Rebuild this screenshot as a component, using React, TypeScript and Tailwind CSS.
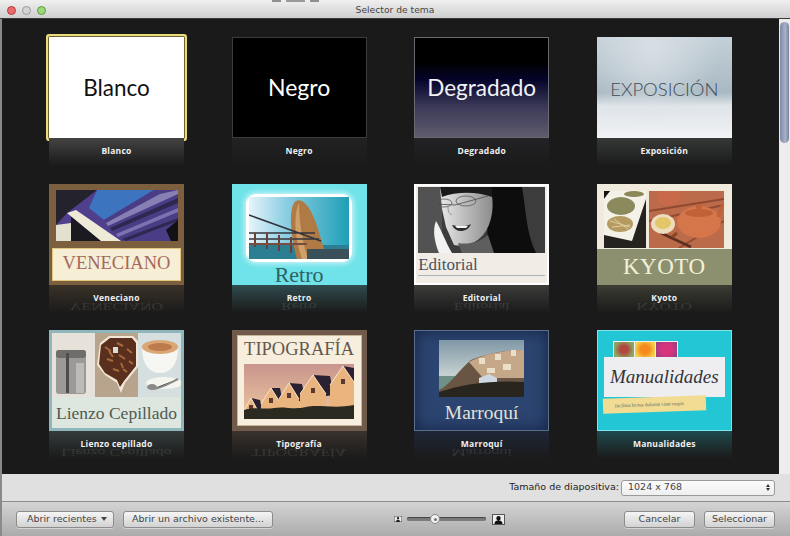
import * as React from 'react';

const uiFont = "font-['DejaVu_Sans',sans-serif]";
const labelFont = "font-['Open_Sans',sans-serif]";
const serif = "font-['Liberation_Serif',serif]";
const gill = "font-['Lato',sans-serif]";

function Photo({ w, h, children, className = '' }: { w: number; h: number; children: React.ReactNode; className?: string }) {
  return (
    <svg viewBox={`0 0 ${w} ${h}`} width={w} height={h} preserveAspectRatio="none" className={`block shrink-0 ${className}`}>
      <g className="blur-[0.6px]">{children}</g>
    </svg>
  );
}

function VenecianoThumb() {
  return (
    <div className="flex h-full flex-col items-center bg-[#7b5f3f] pt-[6px]">
      <Photo w={122} h={51}>
        <rect width="122" height="51" fill="#4f3f8c" />
        <polygon points="41,0 98,0 48,30 33,18" fill="#3c74c0" />
        <polygon points="0,0 41,0 11,23 0,35" fill="#24222c" />
        <polygon points="48,30 98,0 122,0 122,51 65,51" fill="#4a3d86" />
        <polygon points="50,33 104,4 122,0 122,4 52,36" fill="#8880b4" />
        <polygon points="54,38 122,8 122,13 56,41" fill="#2c2850" />
        <polygon points="60,44 122,18 122,22 62,47" fill="#7c72b0" />
        <polygon points="66,49 122,28 122,31 70,51" fill="#2c2850" />
        <polygon points="15,26 45,51 15,51" fill="#1b1a20" />
        <polygon points="11,23 20,20 65,51 45,51" fill="#efe9d8" />
        <polygon points="0,35 15,33 15,51 0,51" fill="#e4e0d0" />
        <polygon points="110,40 122,30 122,51 115,51" fill="#121116" />
      </Photo>
      <div className={`mt-[7px] flex h-[33px] w-[129px] items-center justify-center border border-[#e2c77e] bg-[#f7eed6] text-[18.5px] text-[#a4685c] ${serif}`}>
        VENECIANO
      </div>
    </div>
  );
}

function RetroThumb() {
  return (
    <div className="flex h-full flex-col items-center bg-[#6fe3e9] pt-[10px]">
      <div className="rounded-[10px] border border-white bg-white p-[2px] shadow-[0_0_5px_2px_rgba(255,255,255,0.6)]">
        <Photo w={100} h={62}>
          <defs>
            <linearGradient id="retroSky" x1="0" y1="0" x2="1" y2="0">
              <stop offset="0" stopColor="#e6f4fa" />
              <stop offset="0.35" stopColor="#8fd0e4" />
              <stop offset="1" stopColor="#1f9fb6" />
            </linearGradient>
          </defs>
          <rect width="100" height="62" fill="url(#retroSky)" />
          <rect y="48" width="100" height="14" fill="#2c7f92" />
          <path d="M48 62C40 35 40 8 47 4c7-4 16 8 22 28 3 10 6 20 9 30z" fill="#b07a45" />
          <path d="M50 6c-6 12-4 36 3 56h6C52 40 50 20 50 6z" fill="#d0a06a" />
          <path d="M0 18L72 44M0 36h66M0 42h70" stroke="#33343c" strokeWidth="1.6" fill="none" />
          <path d="M6 36v14M18 36v16M30 38v16M42 40v16" stroke="#6b3f35" strokeWidth="2" />
          <rect x="0" y="46" width="58" height="2" fill="#7a4c40" />
          <rect x="58" y="52" width="42" height="10" fill="#39505a" />
        </Photo>
      </div>
      <div className={`text-[22px] leading-[26px] text-[#2f615f] ${serif}`}>Retro</div>
    </div>
  );
}

function EditorialThumb() {
  return (
    <div className="flex h-full flex-col border-2 border-white bg-[#f2ece7] px-[2px] pt-[1px]">
      <Photo w={127} h={66}>
        <defs>
          <linearGradient id="faceTone" x1="0" y1="0" x2="1" y2="0">
            <stop offset="0" stopColor="#e8e8e8" />
            <stop offset="1" stopColor="#8c8c8c" />
          </linearGradient>
        </defs>
        <rect width="127" height="66" fill="#3c3c3c" />
        <rect width="24" height="66" fill="#525252" />
        <path d="M68 0h36c4 22 4 46 14 66H70z" fill="#0d0d0d" />
        <path d="M22 0h50c5 16 3 36-7 48-8 9-18 12-29 10L28 40 24 22z" fill="url(#faceTone)" />
        <path d="M22 0h52v10C60 5 40 4 24 10z" fill="#1a1a1a" />
        <path d="M40 56c10 2 22-1 30-8l6 18H44z" fill="#5e5e5e" />
        <path d="M18 34c5 8 10 22 16 32H21c-4-10-7-22-3-32z" fill="#f2f2f2" />
        <path d="M34 38c7 2 14 2 19-1-2 5-6 7-10 7s-7-2-9-6z" fill="#2c2c2c" />
        <path d="M37 39h13l-2 2H39z" fill="#f2f2f2" />
        <path d="M17 17l20 1 33-9" stroke="#4a4a4a" strokeWidth="0.8" fill="none" />
        <ellipse cx="26" cy="16" rx="8" ry="4" fill="none" stroke="#5a5a5a" strokeWidth="0.8" />
        <ellipse cx="48" cy="14" rx="10" ry="5" fill="none" stroke="#5a5a5a" strokeWidth="0.8" />
        <path d="M30 20c0 4 1 7 4 8" stroke="#999" strokeWidth="1" fill="none" />
      </Photo>
      <div className={`mt-[2px] text-[17px] leading-[19px] text-[#46535f] ${serif}`}>Editorial</div>
      <div className="mt-[1px] h-[1px] bg-[#aab5b5]" />
    </div>
  );
}

function KyotoThumb() {
  return (
    <div className="flex h-full flex-col bg-[#8d906f]">
      <div className="flex h-[69px] gap-[3px] bg-[#efeadb] px-[7px] pt-[7px]">
        <Photo w={42} h={57}>
          <rect width="42" height="57" fill="#25231f" />
          <polygon points="6,0 42,0 42,8 28,50 0,44 0,8" fill="#f4f1e8" />
          <ellipse cx="17" cy="15" rx="14" ry="9" fill="#8b8a5c" />
          <ellipse cx="30" cy="3" rx="10" ry="3" fill="#8c8757" />
          <ellipse cx="16" cy="33" rx="13" ry="8" fill="#b49b62" />
          <path d="M6 30l20 6M8 36l18-2M10 28l14 10" stroke="#e0cda0" strokeWidth="1" />
          <polygon points="0,0 6,0 0,6" fill="#111" />
        </Photo>
        <Photo w={75} h={57}>
          <rect width="75" height="57" fill="#bb6a4a" />
          <path d="M0 20L75 8M0 30L75 14M30 57L75 30" stroke="#8f4a30" strokeWidth="2" />
          <path d="M12 42l30 14" stroke="#5a3020" strokeWidth="2.5" />
          <ellipse cx="50" cy="31" rx="22" ry="16" fill="#d4754a" />
          <ellipse cx="50" cy="22" rx="14" ry="4" fill="#c06238" />
          <circle cx="50" cy="16" r="3" fill="#c06238" />
          <path d="M69 26c2-6 4-10 5-14" stroke="#c06238" strokeWidth="3" fill="none" />
          <ellipse cx="14" cy="33" rx="12" ry="10" fill="#eeddbd" />
          <ellipse cx="14" cy="32" rx="8" ry="6" fill="#e3c66a" />
          <ellipse cx="20" cy="6" rx="12" ry="9" fill="#c8694a" />
          <path d="M28 42l-5 4" stroke="#8a4526" strokeWidth="3" />
        </Photo>
      </div>
      <div className={`mt-[1px] flex flex-1 items-center justify-center text-[23px] tracking-[0.5px] text-[#f3f0d8] ${serif}`}>KYOTO</div>
    </div>
  );
}

function LienzoThumb() {
  return (
    <div className="flex h-full flex-col border-[3px] border-[#8fb6bb] bg-[#dde6df]">
      <div className="flex h-[64px]">
        <Photo w={43} h={64}>
          <rect width="43" height="64" fill="#e6e2da" />
          <rect x="4" y="17" width="30" height="44" rx="3" fill="#9b9a98" />
          <rect x="4" y="17" width="30" height="8" rx="3" fill="#6f6d6c" />
          <rect x="14" y="20" width="3" height="40" fill="#4f4c4b" />
          <rect x="24" y="30" width="8" height="30" fill="#bcbbb8" />
        </Photo>
        <Photo w={43} h={64}>
          <rect width="43" height="64" fill="#b8a48c" />
          <polygon points="5,10 14,3 38,3 43,8 43,34 30,50 26,60 22,50 10,42 2,32" fill="#f2e6d6" />
          <polygon points="6,12 15,5 37,5 41,10 41,33 29,48 25,54 22,47 10,40 4,31" fill="#5a2f1e" />
          <path d="M10 14l6 4M22 10l6 3M32 16l5 4M12 26l6 2M24 22l6 4M34 28l4 3M18 36l6 2M28 36l4 3M14 18l4 6M26 30l2 5" stroke="#a76a3e" strokeWidth="2" />
          <rect x="18" y="14" width="5" height="6" fill="#dcdcd8" />
        </Photo>
        <Photo w={43} h={64}>
          <rect width="43" height="64" fill="#d6dfdf" />
          <path d="M4 14c0-6 36-6 36 0 0 18-8 26-18 26S4 32 4 14z" fill="#f6f6f2" />
          <ellipse cx="22" cy="14" rx="18" ry="7" fill="#d9a674" />
          <ellipse cx="22" cy="14" rx="12" ry="4" fill="#bd7a4c" />
          <ellipse cx="26" cy="50" rx="18" ry="6" fill="#f5f5f0" />
          <path d="M14 56c8 0 18-6 26-10" stroke="#8a8a88" strokeWidth="2" />
          <ellipse cx="14" cy="54" rx="5" ry="3" fill="#8a8a88" />
        </Photo>
      </div>
      <div className={`mt-[1px] flex flex-1 items-center justify-center whitespace-nowrap text-[17.5px] text-[#4e5b53] ${serif}`}>Lienzo Cepillado</div>
    </div>
  );
}

// gable apex x, apex y, half width, roof end x/y
const houses = [
  [7, 34, 7, 16, 36],
  [27, 24, 10, 36, 24],
  [45, 19, 10, 58, 20],
  [69, 11, 13, 86, 12],
  [99, 2, 13, 110, 4],
];

function TipografiaThumb() {
  return (
    <div className="h-full border-[5px] border-[#6f5a4b]">
      <div className="flex h-full flex-col items-center border border-[#c9b49a] bg-[#f8eedd]">
        <div className={`mt-[2px] text-[18.5px] leading-[22px] text-[#62584e] ${serif}`}>TIPOGRAFÍA</div>
        <Photo w={110} h={55} className="mt-[4px]">
          <defs>
            <linearGradient id="tipoSky" x1="0" y1="0" x2="0" y2="1">
              <stop offset="0" stopColor="#c9958d" />
              <stop offset="1" stopColor="#eec9a0" />
            </linearGradient>
          </defs>
          <rect width="110" height="55" fill="url(#tipoSky)" />
          {houses.map(([ax, ay, hw, rx, ry]) => (
            <g key={ax}>
              <polygon points={`${ax},${ay} ${rx},${ry} ${rx + 4},${ay + 20} ${ax + hw},${ay + hw + 8}`} fill="#2a2230" />
              <polygon points={`${ax - hw},${ay + hw + 6} ${ax},${ay} ${ax + hw},${ay + hw + 6} ${ax + hw},50 ${ax - hw},50`} fill="#e9b47e" />
              <polyline points={`${ax - hw},${ay + hw + 6} ${ax},${ay} ${ax + hw},${ay + hw + 6}`} fill="none" stroke="#f8e4c8" strokeWidth="1" />
              <rect x={ax - 2} y={ay + hw} width="4" height="5" fill="#5a3a30" />
            </g>
          ))}
          <path d="M0 46c10-4 20 0 30-2s20 2 32-1 28 2 48-2v14H0z" fill="#2b2a20" />
        </Photo>
      </div>
    </div>
  );
}

function MarroquiThumb() {
  return (
    <div className="flex h-full flex-col items-center border border-[#5a6f8c] bg-[#2c4570] pt-[9px] shadow-[inset_0_0_16px_rgba(10,20,50,0.7)]">
      <Photo w={85} h={57}>
        <defs>
          <linearGradient id="moSky" x1="0" y1="0" x2="0" y2="1">
            <stop offset="0" stopColor="#7f97a6" />
            <stop offset="0.6" stopColor="#c5d0d0" />
          </linearGradient>
        </defs>
        <rect width="85" height="57" fill="url(#moSky)" />
        <rect y="36" width="26" height="21" fill="#6f9088" />
        <path d="M0 50c10-4 20-20 32-30 14-6 36-10 53-10v47H0z" fill="#6a5544" />
        <path d="M30 22c14-8 36-12 55-12v28H44z" fill="#c4a888" />
        <path d="M40 18h6v6h-6zM56 14h6v6h-6zM72 10h5v6h-5zM48 28h8v5h-8zM64 24h8v6h-8z" fill="#ecdfc9" />
        <path d="M40 38l10-4 8 4v6H40z" fill="#cfd8e2" />
        <path d="M0 52c24-8 54-12 85-10v15H0z" fill="#27251d" />
      </Photo>
      <div className={`mt-[3px] text-[19.5px] leading-[26px] text-[#e4e2d6] ${serif}`}>Marroquí</div>
    </div>
  );
}

function ManualidadesThumb() {
  return (
    <div className="h-full overflow-hidden border border-[#7fe4ea] bg-[#22c6d5] pl-[6px] pt-[10px]">
      <div className="ml-[9px] flex w-[65px] gap-[1px] bg-[#f0f0f0] p-[1px]">
        <div className="h-[15px] w-[21px] bg-[radial-gradient(circle,#b0483f_30%,#8aa864_75%)]" />
        <div className="h-[15px] w-[20px] bg-[radial-gradient(circle,#f58a1f_35%,#f5d04a_80%)]" />
        <div className="h-[15px] w-[21px] bg-[radial-gradient(circle,#d8347e_40%,#9c3d7f_90%)]" />
      </div>
      <div className={`-mt-[1px] flex h-[40px] w-[121px] items-center justify-center bg-[#eeeef0] text-[19px] italic text-[#333338] ${serif}`}>
        Manualidades
      </div>
      <div className={`-ml-[1px] flex h-[15px] w-[103px] -rotate-2 items-center bg-[#f2dc94] pl-[12px] text-[5px] text-[#52615a] ${serif}`}>
        facilisis lectus dolorist vitae turpis
      </div>
    </div>
  );
}

const themes: { name: string; glow: string; thumb: React.ReactNode; selected?: boolean; mirror?: string }[] = [
  { name: 'Blanco', glow: 'from-[#444444]', thumb: <div className={`flex h-full items-center justify-center bg-white text-[22.5px] text-[#111] ${gill}`}>Blanco</div>, selected: true },
  { name: 'Negro', glow: 'from-[#222222]', thumb: <div className={`flex h-full items-center justify-center border border-[#3c3c3c] bg-black text-[23px] text-white ${gill}`}>Negro</div> },
  { name: 'Degradado', glow: 'from-[#232326]', thumb: <div className={`flex h-full items-center justify-center border border-[#6a6a72] bg-[linear-gradient(#000_0%,#000_25%,#05042a_42%,#3c3a58_70%,#5e5c6c_100%)] text-[22.5px] text-[#f2f2f4] ${gill}`}>Degradado</div> },
  { name: 'Exposición', glow: 'from-[#363838]', thumb: <div className={`flex h-full items-center justify-center bg-[radial-gradient(ellipse_at_40%_10%,#d8dfe4_0%,rgba(216,223,228,0)_60%),linear-gradient(#c4d0d7_0%,#a9b9c3_55%,#dfe4e8_68%,#f1f2f5_100%)] pt-[4px] text-[18.5px] font-light text-[#3f4c55] ${gill}`}>EXPOSICIÓN</div> },
  { name: 'Veneciano', glow: 'from-[#3a3228]', thumb: <VenecianoThumb />, mirror: 'VENECIANO' },
  { name: 'Retro', glow: 'from-[#2f4c4f]', thumb: <RetroThumb />, mirror: 'Retro' },
  { name: 'Editorial', glow: 'from-[#3d3c3b]', thumb: <EditorialThumb />, mirror: 'Editorial' },
  { name: 'Kyoto', glow: 'from-[#3c3d33]', thumb: <KyotoThumb />, mirror: 'KYOTO' },
  { name: 'Lienzo cepillado', glow: 'from-[#343b3b]', thumb: <LienzoThumb />, mirror: 'Lienzo Cepillado' },
  { name: 'Tipografía', glow: 'from-[#3a322c]', thumb: <TipografiaThumb />, mirror: 'TIPOGRAFÍA' },
  { name: 'Marroquí', glow: 'from-[#1e2636]', thumb: <MarroquiThumb />, mirror: 'Marroquí' },
  { name: 'Manualidades', glow: 'from-[#1b4a4e]', thumb: <ManualidadesThumb /> },
];

function ThemeCard({ theme }: { theme: (typeof themes)[number] }) {
  return (
    <div className="flex flex-col">
      <div className={`h-[101px] w-[135px] ${theme.selected ? 'rounded-[1px] shadow-[0_0_0_1px_#6e6232,0_0_0_3px_#eadb7c]' : ''}`}>
        {theme.thumb}
      </div>
      <div className={`relative flex h-[28px] justify-center overflow-hidden bg-gradient-to-b ${theme.glow} to-[#1a1a1a]`}>
        {theme.mirror && (
          <span className={`absolute top-[15px] whitespace-nowrap text-[16px] leading-[13px] text-white/10 [transform:scaleY(-0.7)] ${serif}`}>{theme.mirror}</span>
        )}
        <span className={`relative mt-[7px] text-[8.5px] font-bold leading-[11px] tracking-[0.25px] text-[#f0f0f0] ${labelFont}`}>{theme.name}</span>
      </div>
    </div>
  );
}

function MacButton({ children, className = '' }: { children: React.ReactNode; className?: string }) {
  return (
    <button className={`flex h-[17px] items-center justify-center rounded-[3px] border border-[#8c8c8c] bg-[linear-gradient(#f5f5f5,#d2d2d2)] text-[9.5px] text-[#444] shadow-[0_1px_0_rgba(255,255,255,0.4)] ${uiFont} ${className}`}>
      {children}
    </button>
  );
}

function Light({ className }: { className: string }) {
  return <div className={`h-[9px] w-[9px] rounded-full border ${className}`} />;
}

export default function App() {
  return (
    <div className={`flex h-[536px] w-[790px] flex-col overflow-hidden bg-[#8a8a8a] ${uiFont}`}>
      <div className="relative flex h-[19px] shrink-0 items-center justify-center border-b border-[#3a3a3a] bg-[linear-gradient(#f0f0f0,#cfcfcf)]">
        <div className="absolute left-[272px] top-0 flex gap-[5px]">
          <div className="h-[2px] w-[9px] bg-[#8f8f8f]" />
          <div className="h-[2px] w-[19px] bg-[#9a9a9a]" />
          <div className="h-[2px] w-[9px] bg-[#8f8f8f]" />
        </div>
        <div className="absolute left-[7px] top-[6px] flex gap-[6px]">
          <Light className="border-[#b03a3a] bg-[#ec6a6a]" />
          <Light className="border-[#9a9a9a] bg-[#d4d4d4]" />
          <Light className="border-[#5d9a3c] bg-[#9ad978]" />
        </div>
        <span className="mt-[2px] text-[9.2px] text-[#444]">Selector de tema</span>
      </div>

      <div className="ml-[2px] flex h-[455px] shrink-0">
        <div className="h-full flex-1 overflow-hidden bg-[#1a1a1a] pl-[47px] pt-[18px]">
          <div className="grid w-[684px] grid-cols-[repeat(4,135px)] gap-x-[47.6px] [grid-auto-rows:146.5px]">
            {themes.map((t) => (
              <ThemeCard key={t.name} theme={t} />
            ))}
          </div>
        </div>
        <div className="h-full w-[11px] bg-[#ededed] px-[1px] pt-[3px]">
          <div className="h-[121px] w-[9px] rounded-full bg-[linear-gradient(90deg,#7d8aa8,#a8b2c8_60%,#76829e)]" />
        </div>
      </div>

      <div className="ml-[2px] flex h-[28px] shrink-0 items-center justify-end gap-[2px] border-b border-[#8d8d8d] bg-[#e0e0e0] pr-[15px]">
        <span className="text-[9.5px] text-[#222]">Tamaño de diapositiva:</span>
        <div className="flex h-[16px] w-[154px] items-center justify-between rounded-[3px] border border-[#9a9a9a] bg-[linear-gradient(#fbfbfb,#efefef)] pl-[6px] pr-[4px] text-[9.5px] text-[#444]">
          <span>1024 x 768</span>
          <span className="flex flex-col gap-[1px]">
            <span className="h-0 w-0 border-x-[2.5px] border-b-[3px] border-x-transparent border-b-[#333]" />
            <span className="h-0 w-0 border-x-[2.5px] border-t-[3px] border-x-transparent border-t-[#333]" />
          </span>
        </div>
      </div>

      <div className="ml-[2px] flex flex-1 items-center bg-[linear-gradient(#d4d4d4,#ababab)] pl-[14px] pr-[15px]">
        <MacButton className="w-[98px] !justify-between pl-[10px] pr-[6px]">
          <span>Abrir recientes</span>
          <span className="h-0 w-0 border-x-[3px] border-t-[4px] border-x-transparent border-t-[#444]" />
        </MacButton>
        <MacButton className="ml-[9px] w-[150px]">Abrir un archivo existente...</MacButton>

        <div className="ml-[121px] flex items-center">
          <svg viewBox="0 0 8 6" width="8" height="6">
            <rect width="8" height="6" fill="#eee" stroke="#444" />
            <path d="M2 6c0-2 1-2 2-2s2 0 2 2zM4 1a1.2 1.2 0 100 2.4A1.2 1.2 0 004 1z" fill="#222" />
          </svg>
          <div className="relative ml-[5px] h-[4px] w-[79px] rounded-full bg-[#7c7c7c] shadow-[inset_0_1px_1px_#444]">
            <div className="absolute left-[23px] top-[-3px] flex h-[10px] w-[10px] items-center justify-center rounded-full border border-[#888] bg-[#f0f0f0]">
              <div className="h-[3px] w-[3px] rounded-full bg-[#777]" />
            </div>
          </div>
          <svg viewBox="0 0 13 11" width="13" height="11" className="ml-[6px]">
            <rect x="0.5" y="0.5" width="12" height="10" fill="#eee" stroke="#555" />
            <path d="M2.5 10c0-3 2-3.500 4-3.500s4 .5 4 3.500zM6.500 2a2.200 2.200 0 100 4.400 2.200 2.200 0 000-4.400z" fill="#111" />
          </svg>
        </div>

        <MacButton className="ml-auto w-[71px]">Cancelar</MacButton>
        <MacButton className="ml-[9px] w-[71px]">Seleccionar</MacButton>
      </div>
    </div>
  );
}
